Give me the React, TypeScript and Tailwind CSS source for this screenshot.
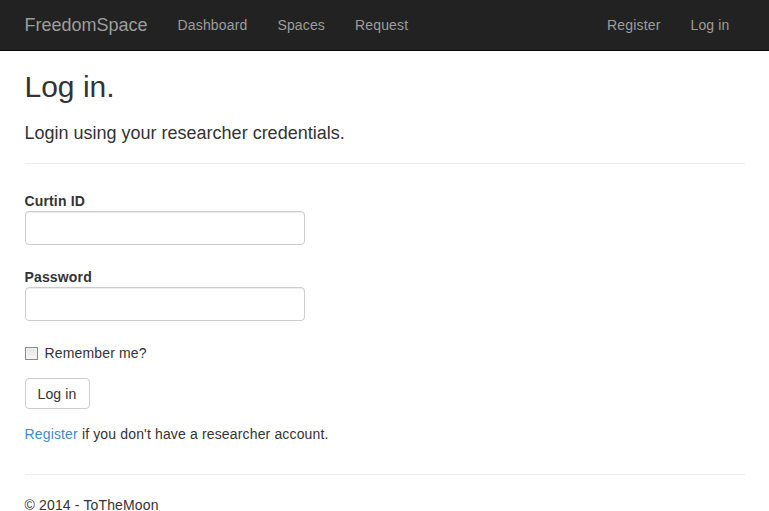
import React from "react";

export default function App() {
  return (
    <div className="h-[511px] overflow-hidden bg-white font-['Liberation_Sans',Arial,sans-serif] text-[14px] leading-[20px] tracking-[0.15px] text-[#333]">
      <nav className="h-[51px] border-b border-[#080808] bg-[#222]">
        <div className="mx-auto flex w-[750px] px-[15px]">
          <a className="-ml-[15px] px-[15px] py-[15px] text-[18px] leading-[20px] tracking-normal text-[#9d9d9d]">FreedomSpace</a>
          <ul className="flex">
            <li><a className="block px-[15px] py-[15px] text-[#9d9d9d]">Dashboard</a></li>
            <li><a className="block px-[15px] py-[15px] text-[#9d9d9d]">Spaces</a></li>
            <li><a className="block px-[15px] py-[15px] text-[#9d9d9d]">Request</a></li>
          </ul>
          <ul className="ml-auto flex">
            <li><a className="block px-[15px] py-[15px] text-[#9d9d9d]">Register</a></li>
            <li><a className="block px-[15px] py-[15px] text-[#9d9d9d]">Log in</a></li>
          </ul>
        </div>
      </nav>
      <div className="mx-auto w-[750px] px-[15px]">
        <h2 className="mb-[10px] mt-[19px] text-[30px] font-normal leading-[33px] tracking-normal">Log in.</h2>
        <h4 className="mt-[20px] text-[18px] font-normal leading-[20px] tracking-normal">Login using your researcher credentials.</h4>
        <hr className="my-[20px] border-0 border-t border-[#eee]" />
        <div className="mb-[15px]">
          <label className="block pt-[7px] font-bold leading-[20px]">Curtin ID</label>
          <input
            type="text"
            className="block h-[34px] w-[280px] rounded-[4px] border border-[#ccc] bg-white px-[12px] shadow-[inset_0_1px_1px_rgba(0,0,0,0.075)] outline-none"
          />
        </div>
        <div className="mb-[15px]">
          <label className="block pt-[7px] font-bold leading-[20px]">Password</label>
          <input
            type="password"
            className="block h-[34px] w-[280px] rounded-[4px] border border-[#ccc] bg-white px-[12px] shadow-[inset_0_1px_1px_rgba(0,0,0,0.075)] outline-none"
          />
        </div>
        <div className="mb-[15px] pt-[7px]">
          <label className="flex h-[20px] items-center">
            <span className="box-border block h-[13px] w-[13px] border border-[#8a8a8a] bg-gradient-to-b from-[#e6e6e6] to-[#f6f6f6] shadow-[inset_0_0_0_1px_#f4f4f4]" />
            <span className="ml-[7px]">Remember me?</span>
          </label>
        </div>
        <div className="mb-[15px]">
          <button className="box-border h-[31px] rounded-[4px] border border-[#ccc] bg-white px-[12px] text-[14px] leading-[20px] text-[#333]">
            Log in
          </button>
        </div>
        <p>
          <a className="text-[#428bca]">Register</a> if you don't have a researcher account.
        </p>
        <hr className="mb-[20px] mt-[30px] border-0 border-t border-[#eee]" />
        <footer>
          <p>© 2014 - ToTheMoon</p>
        </footer>
      </div>
    </div>
  );
}
